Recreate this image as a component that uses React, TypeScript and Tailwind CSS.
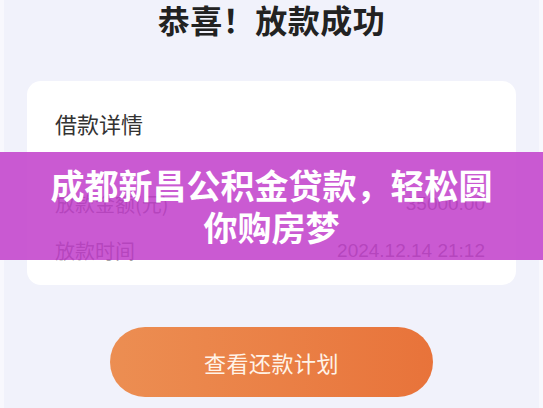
import React from "react";

export default function App() {
  return (
    <div
      className="relative w-[543px] h-[408px] overflow-hidden bg-[#f8f8fd] flex"
      style={{ fontFamily: '"Noto Sans CJK SC", "Noto Sans", sans-serif' }}
    >
      <div className="flex-1 mx-[4px] bg-[#f1f2fb] flex flex-col">
        <div className="h-[38px] flex items-center justify-center text-[32px] leading-[38px] font-bold text-[#222222] tracking-[0.5px]">
          恭喜！放款成功
        </div>
        <div className="mt-[43px] ml-[23px] mr-[23px] bg-white rounded-[14px] pt-[27px] pb-[20px] pl-[28px] pr-[31px] flex flex-col">
          <div className="text-[22px] leading-[30px] text-[#333333]">借款详情</div>
          <div className="mt-[52px] flex justify-between items-center text-[20px] leading-[28px] text-[#5c5c5c]">
            <span>放款金额(元)</span>
            <span className="text-[19px]" style={{ fontFamily: '"Liberation Sans", Arial, sans-serif' }}>35000.00</span>
          </div>
          <div className="mt-[19px] flex justify-between items-center text-[20px] leading-[28px] text-[#5c5c5c]">
            <span>放款时间</span>
            <span className="text-[19px]" style={{ fontFamily: '"Liberation Sans", Arial, sans-serif' }}>2024.12.14 21:12</span>
          </div>
        </div>
        <div className="mt-[42px] flex justify-center">
          <div className="w-[323px] h-[70px] rounded-full bg-gradient-to-r from-[#ec8e52] to-[#e8733a] flex items-center justify-center text-[22px] text-[#fff3e8] tracking-[0.5px]">
            查看还款计划
          </div>
        </div>
      </div>
      <div className="absolute left-0 right-0 top-[152px] h-[108px] bg-[rgba(194,66,203,0.87)] flex flex-col items-center justify-center text-white font-bold text-[34px] leading-[42px]">
        <div>成都新昌公积金贷款，轻松圆</div>
        <div>你购房梦</div>
      </div>
    </div>
  );
}
